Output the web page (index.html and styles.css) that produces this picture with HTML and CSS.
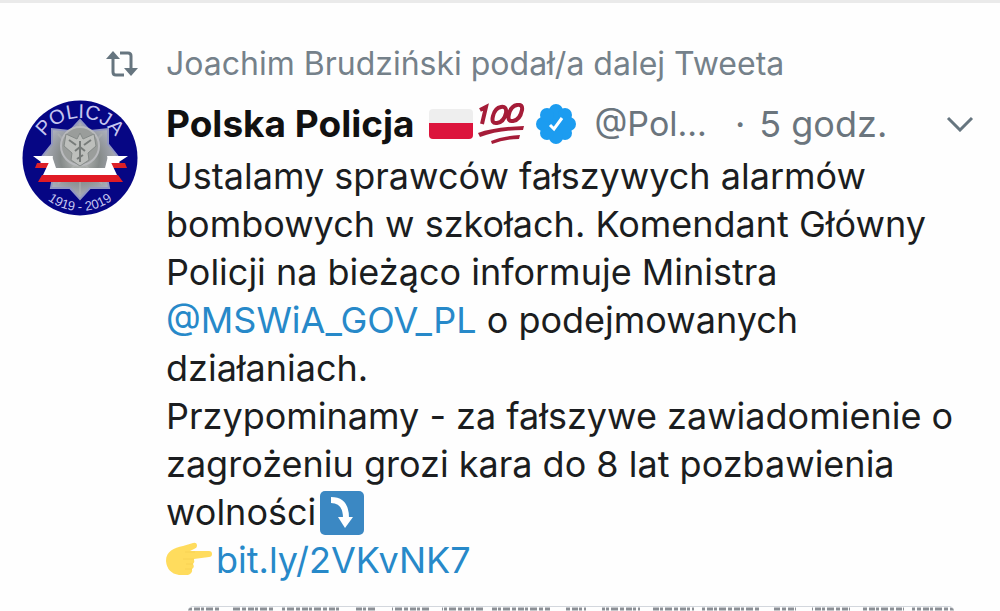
FILE: index.html
```html
<!DOCTYPE html>
<html lang="pl">
<head>
<meta charset="utf-8">
<meta name="viewport" content="width=device-width, initial-scale=1">
<title>Tweet</title>
<link rel="stylesheet" href="styles.css">
</head>
<body>
<main class="timeline">
  <article class="tweet">
    <svg class="retweet-icon" viewBox="0 0 32 28" aria-hidden="true">
      <path d="M7 6V22Q7 25 10 25H18" /><path d="M14 3H22Q25 3 25 6V22" />
      <path class="solid" d="M0 9L7 1L14 9ZM18 18H32L25 26Z" />
    </svg>
    <p class="context">Joachim Brudziński podał/a dalej Tweeta</p>

    <svg class="avatar" viewBox="0 0 116 116" role="img" aria-label="Polska Policja">
      <defs>
        <path id="arc-top" d="M16 60A42 42 0 0 1 100 60" />
        <path id="arc-bottom" d="M5 58A53 53 0 0 0 111 58" />
        <radialGradient id="silver"><stop offset="0" stop-color="#c4c6c3" /><stop offset=".5" stop-color="#858a89" /><stop offset="1" stop-color="#adb0bd" /></radialGradient>
      </defs>
      <circle cx="58" cy="58" r="57.500" fill="#060684" />
      <path d="M58 20L68 31L86 29V44L97 58L84 72L87 88H68L58 99L48 88H29L32 72L19 58L30 44V29L48 31Z" fill="url(#silver)" stroke="#9297c0" stroke-width="2" />
      <path d="M58 24V94M36 34L80 84M80 34L36 84" stroke="#b8bbb8" stroke-width="2" opacity=".4" />
      <circle cx="58" cy="46" r="19" fill="#9a9d9b" stroke="#b9babd" stroke-width="2" />
      <path d="M58 33L61 39L72 34L74 46L66 53L67 60L58 66L49 60L50 53L42 46L44 34L55 39Z" fill="#bdbfbc" stroke="#858a88" stroke-width="1" />
      <path d="M47 40L54 45M69 40L62 45M53 51L58 47L63 51M55 59L61 55M58 41V62" stroke="#777b79" stroke-width="2" fill="none" />
      <path d="M11 56H31L27 68H14L19 62ZM106 56H85L89 68H102L97 62Z" fill="#fff" />
      <path d="M15 63H29L27 68H13ZM103 63H87L89 68H105Z" fill="#dc2028" />
      <path d="M30 56L21 75H95L86 56L83 68H34Z" fill="#fff" />
      <path d="M20 75H96L101 82H16Z" fill="#e01b25" />
      <text class="badge-title"><textPath href="#arc-top" startOffset="50%" text-anchor="middle">POLICJA</textPath></text>
      <text class="badge-years"><textPath href="#arc-bottom" startOffset="50%" text-anchor="middle">1919 - 2019</textPath></text>
    </svg>

    <div class="content">
      <header class="byline">
        <strong class="name">Polska Policja</strong>
        <svg class="flag" viewBox="0 0 44 32" role="img" aria-label="Flaga Polski"><path d="M0 16V5Q0 1 4 1H40Q44 1 44 5V16Z" fill="#eee" /><path d="M0 15H44V27Q44 31 40 31H4Q0 31 0 27Z" fill="#dc143c" /></svg>
        <svg class="hundred" viewBox="0 0 48 42" role="img" aria-label="100">
          <path d="M3 7L9 4L5 21M29 10Q30 3 24 4Q18 5 16 13Q14 21 20 20Q27 19 29 10ZM45 7Q46 1 40 2Q34 3 32 11Q30 19 36 18Q43 17 45 7Z" />
          <path class="stroke-fill" d="M1 30Q17 24 47 23L46 27Q21 27 3 34ZM14 38Q25 33 43 32L42 36Q27 36 15 41Z" />
        </svg>
        <svg class="verified" viewBox="0 0 42 42" role="img" aria-label="Zweryfikowane">
          <g fill="#1c9cf0"><circle cx="21" cy="21" r="16" /><circle cx="21" cy="8" r="7" /><circle cx="30" cy="12" r="7" /><circle cx="34" cy="21" r="7" /><circle cx="30" cy="30" r="7" /><circle cx="21" cy="34" r="7" /><circle cx="12" cy="30" r="7" /><circle cx="8" cy="21" r="7" /><circle cx="12" cy="12" r="7" /></g>
          <path d="M15 22L19 26L27 15" fill="none" stroke="#fff" stroke-width="3" />
        </svg>
        <span class="handle">@Pol...</span>
        <span class="time"><span class="dot">·</span>5 godz.</span>
        <button class="more" type="button" aria-label="Więcej"><svg viewBox="0 0 28 16" aria-hidden="true"><path d="M2 2L14 14L26 2" /></svg></button>
      </header>
      <p class="body">Ustalamy sprawców fałszywych alarmów bombowych w szkołach. Komendant Główny Policji na bieżąco informuje Ministra <a href="#mswia">@MSWiA_GOV_PL</a> o podejmowanych działaniach.<br>Przypominamy - za fałszywe zawiadomienie o zagrożeniu grozi kara do 8 lat pozbawienia <span class="together">wolności<svg class="emoji arrow" viewBox="0 0 44 44" role="img" aria-label="Strzałka w dół"><rect width="44" height="44" rx="5" fill="#3b88c3" /><path d="M11 9Q26 9 26 27" fill="none" stroke="#fff" stroke-width="6" /><path d="M18 26H33L25 37Z" fill="#fff" /></svg></span><br><svg class="emoji hand" viewBox="0 0 46 34" role="img" aria-label="Zobacz"><path d="M0 19C0 9 8 6 17 4L27 1Q31 0 31 4Q31 6 28 7L24 9H43Q46 9 46 12Q46 15 43 15L28 17Q29 20 27 22Q29 25 26 27Q27 31 22 33H13Q1 31 0 19Z" fill="#ffdc5d" /><path d="M19 10H29M17 17H28M20 22H27M19 27H26" fill="none" stroke="#f8d255" stroke-width="1" /></svg><a href="#link">bit.ly/2VKvNK7</a></p>
      <div class="attachment"><svg class="document" aria-hidden="true"><line class="print" x1="0" y1="2" x2="100%" y2="2" /><line class="words" x1="32" y1="2" x2="100%" y2="2" /></svg></div>
    </div>
  </article>
</main>
</body>
</html>
```
FILE: styles.css
```css
* { box-sizing: border-box; }
body {
  margin: 0;
  background: #fefefe;
  color: #1b1d20;
  font-family: Inter, "Noto Sans", sans-serif;
  font-size: 36px;
  line-height: 48px;
}
p { margin: 0; }
a { color: #2789c9; text-decoration: none; }
.timeline { border-top: 3px solid #eaeaea; }
.tweet {
  display: grid;
  grid-template-columns: 116px minmax(0, 1fr);
  column-gap: 28px;
  row-gap: 12px;
  padding: 37px 26px 0 22px;
}
.retweet-icon {
  width: 32px;
  height: 28px;
  align-self: center;
  justify-self: end;
  fill: none;
  stroke: #66757f;
  stroke-width: 3;
}
.retweet-icon .solid { fill: #66757f; stroke: none; }
.context { color: #75818a; font-size: 32px; }
.avatar { width: 116px; height: 116px; }
.badge-title, .badge-years { font-family: "Liberation Sans", Arial, sans-serif; fill: #c5c5ef; }
.badge-title { font-size: 20px; }
.badge-years { font-size: 13px; }
.byline {
  display: flex;
  align-items: center;
  margin-bottom: 4px;
  white-space: nowrap;
}
.name { color: #111; font-size: 37px; font-weight: 700; }
.flag { width: 44px; height: 32px; margin-left: 14px; }
.hundred {
  width: 48px;
  height: 42px;
  margin-left: 4px;
  fill: none;
  stroke: #a51c38;
  stroke-width: 4;
}
.hundred .stroke-fill { fill: #a51c38; stroke: none; }
.verified { width: 42px; height: 42px; margin-left: 10px; }
.handle { margin-left: 18px; color: #6b757d; font-size: 34px; }
.time { margin-left: 28px; color: #6b757d; }
.dot { margin-right: 14px; }
.more {
  display: flex;
  margin-left: auto;
  padding: 0;
  border: 0;
  background: none;
}
.more svg { width: 28px; height: 16px; fill: none; stroke: #66757f; stroke-width: 3; }
.together { white-space: nowrap; }
.emoji { vertical-align: middle; }
.arrow { width: 44px; height: 44px; margin: -4px 0 0 4px; }
.hand { width: 46px; height: 34px; margin: -8px 4px 0 0; }
.attachment {
  margin: 22px 20px 0 22px;
  overflow: hidden;
  border-top: 1px solid #d3d7dd;
  border-radius: 12px 12px 0 0;
}
.document { display: block; width: 100%; height: 4px; }
.print { stroke: #8c9096; stroke-width: 3; stroke-dasharray: 4 2 6 1 3 2 7 2; }
.words { stroke: #fefefe; stroke-width: 4; stroke-dasharray: 12 42 8 58 14 22 16 38; }
```
